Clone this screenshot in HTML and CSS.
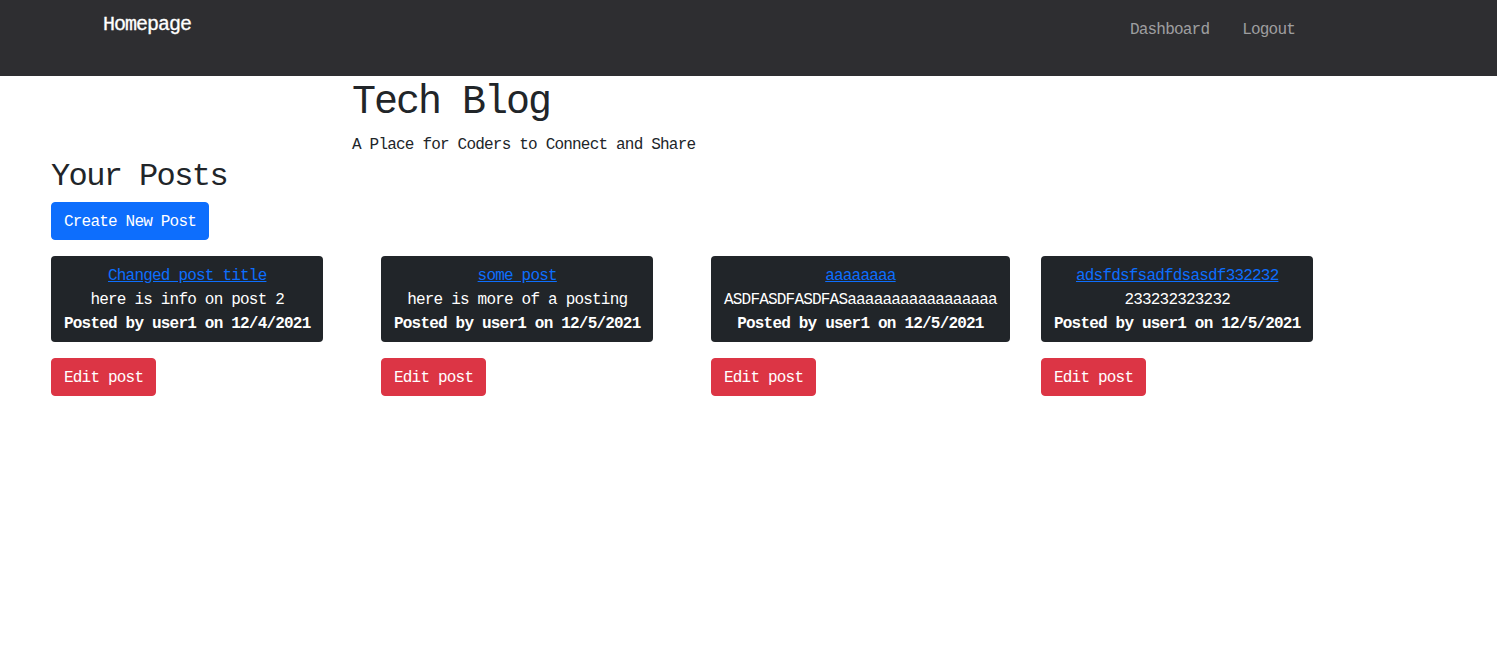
FILE: index.html
```html
<!DOCTYPE html>
<html>
<head>
<meta charset="utf-8">
<title>Tech Blog</title>
<link rel="stylesheet" href="styles.css">
</head>
<body>
<nav class="navbar">
  <a class="brand" href="#">Homepage</a>
  <div class="nav-links">
    <a href="#">Dashboard</a>
    <a href="#">Logout</a>
  </div>
</nav>
<header class="hero">
  <h1>Tech Blog</h1>
  <p>A Place for Coders to Connect and Share</p>
</header>
<main class="dashboard">
  <h2>Your Posts</h2>
  <a class="btn btn-primary" href="#">Create New Post</a>
  <div class="posts">
    <div class="post">
      <div class="card">
        <a href="#">Changed post title</a>
        <p>here is info on post 2</p>
        <p class="meta">Posted by user1 on 12/4/2021</p>
      </div>
      <a class="btn btn-danger" href="#">Edit post</a>
    </div>
    <div class="post">
      <div class="card">
        <a href="#">some post</a>
        <p>here is more of a posting</p>
        <p class="meta">Posted by user1 on 12/5/2021</p>
      </div>
      <a class="btn btn-danger" href="#">Edit post</a>
    </div>
    <div class="post">
      <div class="card">
        <a href="#">aaaaaaaa</a>
        <p>ASDFASDFASDFASaaaaaaaaaaaaaaaaa</p>
        <p class="meta">Posted by user1 on 12/5/2021</p>
      </div>
      <a class="btn btn-danger" href="#">Edit post</a>
    </div>
    <div class="post">
      <div class="card">
        <a href="#">adsfdsfsadfdsasdf332232</a>
        <p>233232323232</p>
        <p class="meta">Posted by user1 on 12/5/2021</p>
      </div>
      <a class="btn btn-danger" href="#">Edit post</a>
    </div>
  </div>
</main>
</body>
</html>
```

FILE: styles.css
```css
* {
  box-sizing: border-box;
  letter-spacing: -0.05em;
}
body {
  margin: 0;
  font-family: "Liberation Mono", "DejaVu Sans Mono", monospace;
  font-size: 16px;
  line-height: 1.5;
  color: #212529;
  background: #fff;
}
.navbar {
  height: 76px;
  background: #2e2e31;
  display: flex;
  justify-content: space-between;
  align-items: flex-start;
  padding: 0 202px 0 103px;
}
.brand {
  color: #fff;
  text-decoration: none;
  font-size: 20px;
  line-height: 30px;
  padding-top: 10px;
  -webkit-text-stroke: 0.3px #fff;
}
.nav-links {
  display: flex;
  gap: 33px;
  padding-top: 18px;
}
.nav-links a {
  color: rgba(255, 255, 255, 0.55);
  text-decoration: none;
}
.hero {
  padding-left: 352px;
}
.hero h1 {
  margin: 0;
  font-size: 40px;
  font-weight: 400;
  line-height: 48px;
  padding-top: 3px;
}
.hero p {
  margin: 6px 0 0;
}
.dashboard {
  padding-left: 51px;
}
.dashboard h2 {
  margin: 1px 0 6px;
  font-size: 32px;
  font-weight: 400;
  line-height: 38px;
}
.btn {
  display: inline-block;
  padding: 7px 12px 5px;
  border: 1px solid transparent;
  border-radius: 4px;
  color: #fff;
  text-decoration: none;
  line-height: 24px;
}
.btn-primary {
  background: #0d6efd;
  border-color: #0d6efd;
}
.btn-danger {
  background: #dc3545;
  border-color: #dc3545;
}
.posts {
  display: grid;
  grid-template-columns: repeat(4, 330px);
  margin-top: 16px;
}
.post {
  display: flex;
  flex-direction: column;
  align-items: flex-start;
  gap: 16px;
}
.card {
  background: #212529;
  color: #fff;
  border-radius: 4px;
  padding: 8px 13px 6px;
  text-align: center;
  display: flex;
  flex-direction: column;
}
.card a {
  color: #0d6efd;
  text-decoration: underline;
}
.card p {
  margin: 0;
}
.card .meta {
  font-weight: 700;
}
```
